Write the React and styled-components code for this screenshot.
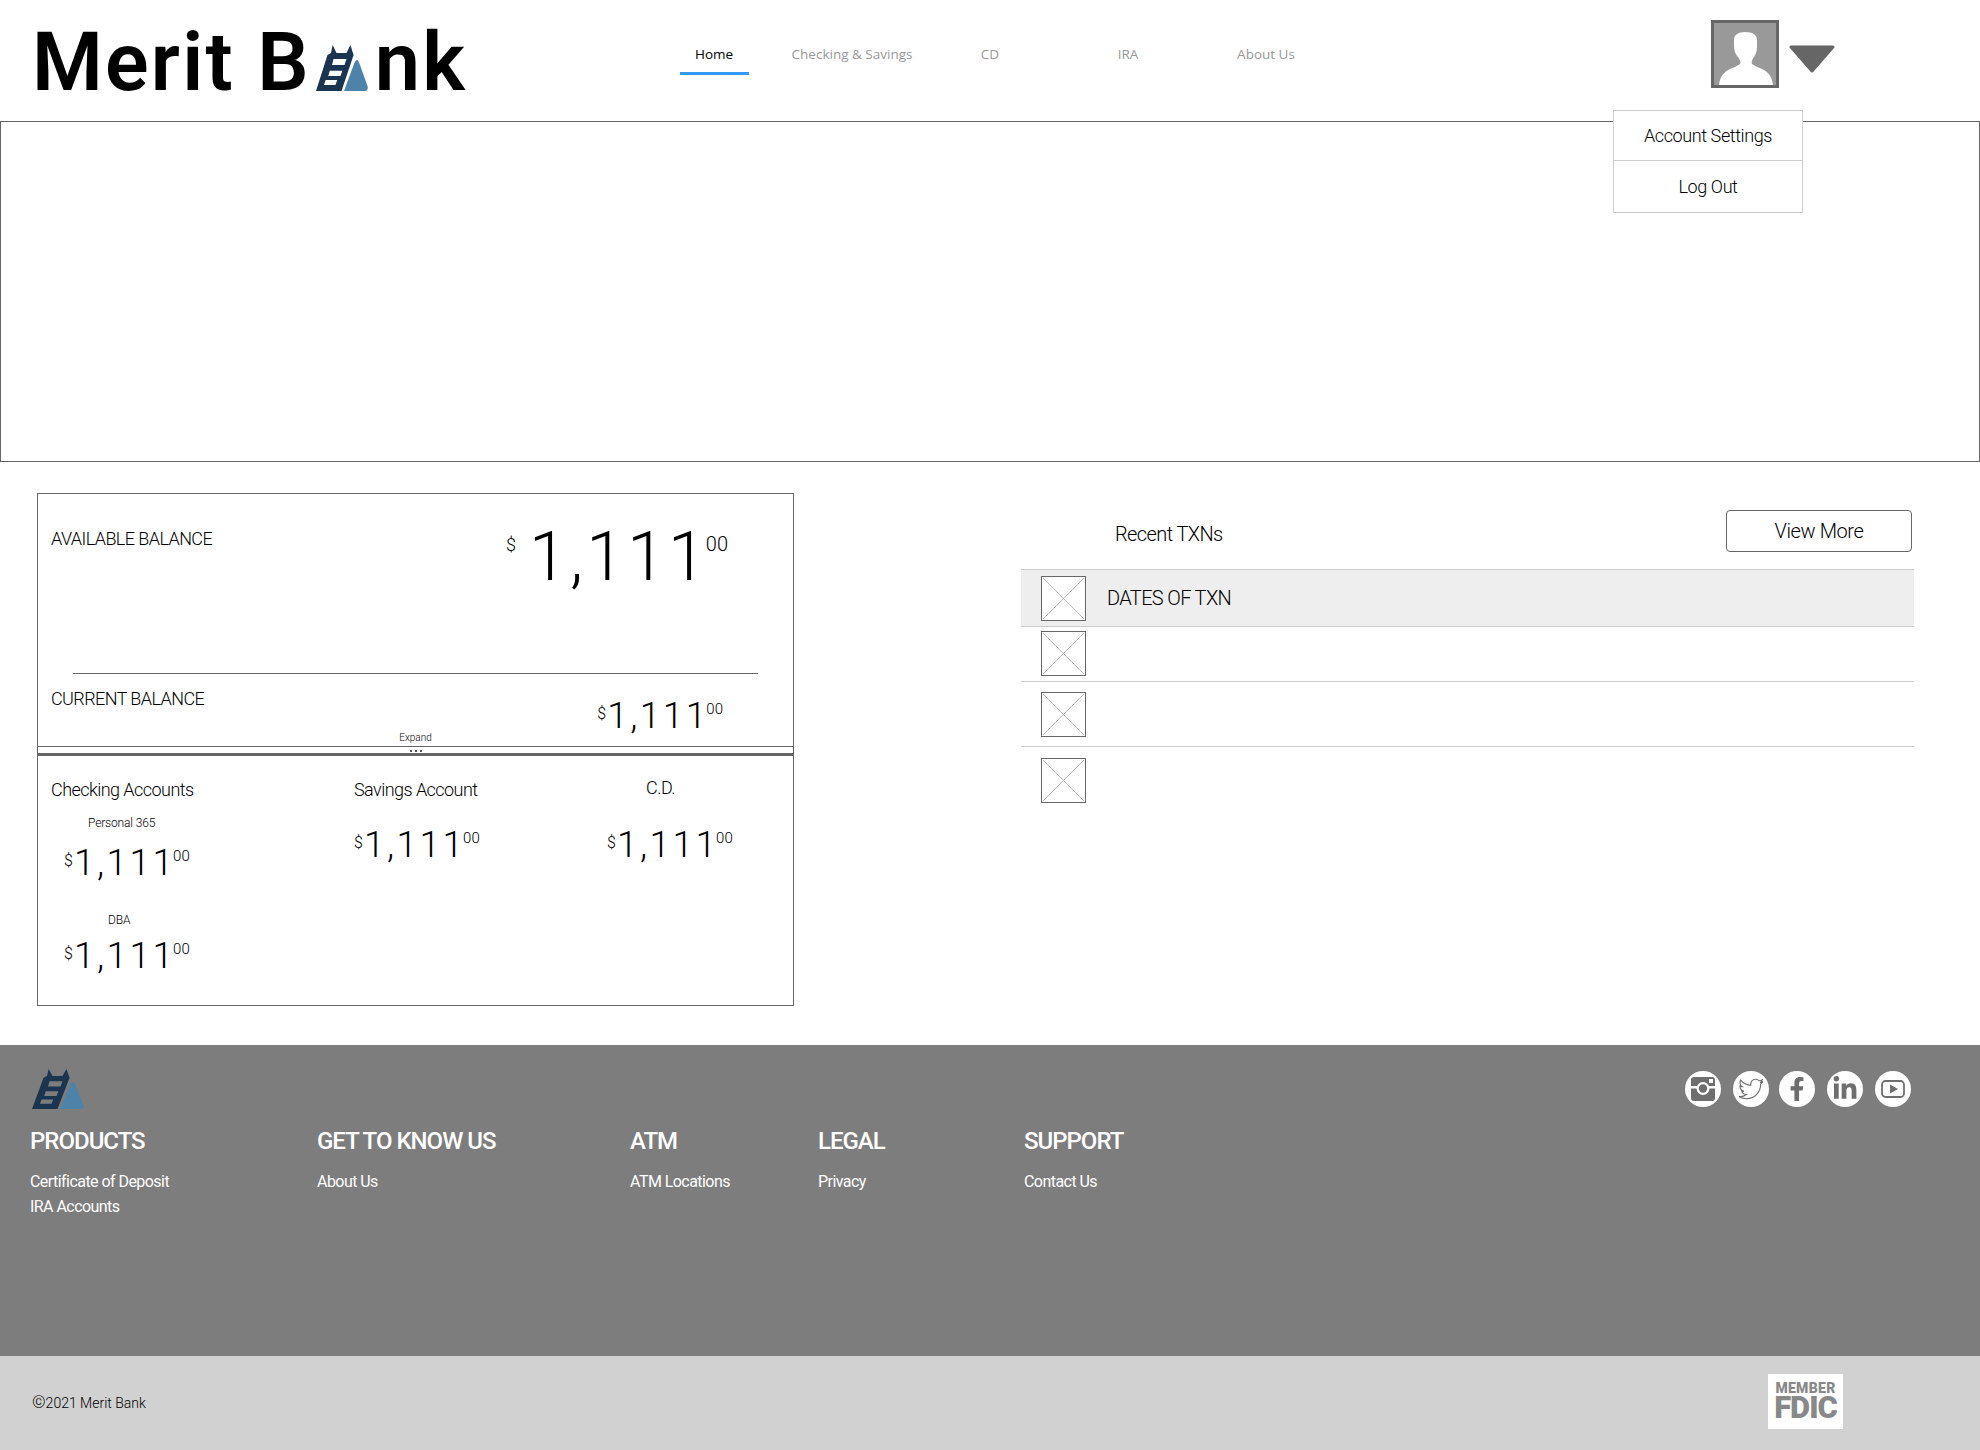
import React from 'react'
import styled, { createGlobalStyle } from 'styled-components'
import { FaTwitter, FaFacebookF, FaLinkedinIn } from 'react-icons/fa'

const GlobalStyle = createGlobalStyle`
  html, body {
    margin: 0;
    padding: 0;
    height: 1450px;
    overflow: hidden;
    background: #fff;
    color: #000;
    font-family: Roboto, "Open Sans", sans-serif;
  }
  * { box-sizing: border-box; }
`

const Page = styled.div`
  width: 1980px;
  height: 1450px;
  overflow: hidden;
  display: flex;
  flex-direction: column;
`

const Header = styled.header`
  position: relative;
  z-index: 2;
  height: 121px;
  display: grid;
  grid-template-columns: 645px 1066px 1fr;
`

const Brand = styled.div`
  display: flex;
  align-items: flex-start;
  padding: 16px 0 0 32px;
  font-size: 81px;
  line-height: 94px;
  font-weight: 600;
  letter-spacing: 2.2px;
  white-space: pre;
`

const BrandMark = styled.svg`
  flex: none;
  margin: 29px 7px 0 5px;
`

const Nav = styled.nav`
  display: flex;
  align-items: flex-start;
  padding-top: 40px;
`

const NavItem = styled.a`
  width: 138px;
  display: flex;
  flex-direction: column;
  align-items: center;
  font-family: "Open Sans", sans-serif;
  font-size: 13.5px;
  line-height: 28px;
  color: ${props => (props.$active ? '#000' : '#999')};

  &:after {
    content: '';
    width: 69px;
    height: 3px;
    margin-top: 4px;
    background: ${props => (props.$active ? '#39f' : 'transparent')};
  }
`

const UserMenu = styled.div`
  position: relative;
  display: flex;
  align-items: flex-start;
  gap: 10px;
  padding-top: 20px;
`

const Avatar = styled.div`
  width: 68px;
  height: 68px;
  border: 3px solid #666;
  background: #999;

  svg { display: block; }
`

const Caret = styled.svg`
  margin-top: 25px;
`

const Dropdown = styled.div`
  position: absolute;
  left: -98px;
  top: 110px;
  width: 190px;
  height: 103px;
  background: #fff;
  border: 1px solid #ccc;
  display: flex;
  flex-direction: column;
`

const DropdownItem = styled.div`
  flex: 1;
  display: flex;
  align-items: center;
  justify-content: center;
  font-size: 18px;
  font-weight: 300;
  letter-spacing: -0.4px;

  &:first-child { flex: none; height: 49px; }
  & + & { border-top: 1px solid #ccc; }
`

const Hero = styled.div`
  height: 341px;
  flex: none;
  border: 1px solid #666;
`

const Main = styled.main`
  height: 583px;
  flex: none;
  display: flex;
  align-items: flex-start;
  padding: 31px 0 0 37px;
`

const BalancePanel = styled.section`
  width: 757px;
  height: 513px;
  flex: none;
  border: 1px solid #666;
  display: flex;
  flex-direction: column;
`

const BalanceRow = styled.div`
  display: flex;
  justify-content: space-between;
  align-items: flex-start;
  height: ${props => props.$height}px;
  padding: 0 ${props => props.$right}px 0 13px;
`

const BalanceLabel = styled.div`
  margin-top: ${props => props.$top}px;
  font-size: 18px;
  line-height: 24px;
  font-weight: 300;
  letter-spacing: -0.58px;
`

const RowRule = styled.div`
  height: 1px;
  margin: 0 35px;
  background: #666;
`

const ExpandLabel = styled.div`
  height: 14px;
  margin-top: -1px;
  margin-bottom: 1px;
  font-size: 10px;
  line-height: 14px;
  font-weight: 300;
  text-align: center;
`

const ExpandBar = styled.div`
  height: 10px;
  border-top: 1px solid #666;
  border-bottom: 3px solid #666;
  display: flex;
  justify-content: center;
  gap: 3px;
  padding-top: 3px;
`

const Dot = styled.span`
  width: 2px;
  height: 2px;
  background: #555;
`

const AccountGrid = styled.div`
  display: grid;
  grid-template-columns: 303px 253px 1fr;
  padding: 0 0 0 13px;
`

const AccountColumn = styled.div`
  display: flex;
  flex-direction: column;
  align-items: flex-start;
`

const AccountTitle = styled.div`
  margin: ${props => props.$top || 22}px 0 0 ${props => props.$left || 0}px;
  font-size: 18px;
  line-height: 24px;
  font-weight: 300;
  letter-spacing: -0.55px;
`

const AccountName = styled.div`
  margin: ${props => props.$top}px 0 0 ${props => props.$left}px;
  font-size: 12px;
  line-height: 16px;
  font-weight: 300;
  letter-spacing: -0.15px;
`

const AmountWrap = styled.div`
  display: flex;
  align-items: flex-start;
  font-weight: 300;
  margin: ${props => props.$top || 0}px 0 0 ${props => props.$left || 0}px;
`

const Dollar = styled.span`
  font-size: ${props => (props.$large ? 18 : 16)}px;
  line-height: 20px;
  margin: ${props => (props.$large ? '12px 13px 0 0' : '10px 1px 0 0')};
`

const Whole = styled.span`
  font-size: ${props => (props.$large ? 68 : 37)}px;
  line-height: ${props => (props.$large ? 68 : 44)}px;
  letter-spacing: ${props => (props.$large ? 3.2 : 2.5)}px;
`

const LastDigit = styled.span`
  letter-spacing: 0;
`

const Cents = styled.span`
  font-size: ${props => (props.$large ? 20 : 15)}px;
  line-height: 20px;
  margin-top: ${props => (props.$large ? 11 : 5)}px;
`

const Amount = ({ large, top, left }) => (
  <AmountWrap $top={top} $left={left}>
    <Dollar $large={large}>$</Dollar>
    <Whole $large={large}>1,11<LastDigit>1</LastDigit></Whole>
    <Cents $large={large}>00</Cents>
  </AmountWrap>
)

const TxnPanel = styled.section`
  width: 893px;
  margin-left: 227px;
  padding-top: 17px;
`

const TxnHeader = styled.div`
  height: 42px;
  display: flex;
  align-items: center;
  justify-content: space-between;
  padding: 0 2px 0 94px;
`

const TxnTitle = styled.div`
  font-size: 20px;
  font-weight: 300;
  letter-spacing: -0.6px;
  margin-top: 6px;
`

const ViewMoreButton = styled.button`
  width: 186px;
  height: 42px;
  background: #fff;
  border: 1px solid #666;
  border-radius: 4px;
  font-family: inherit;
  font-size: 20px;
  font-weight: 300;
  letter-spacing: -0.4px;
  color: #000;
`

const TxnList = styled.div`
  margin-top: 17px;
`

const TxnRow = styled.div`
  height: ${props => props.$height}px;
  display: flex;
  align-items: center;
  gap: 21px;
  padding-left: 20px;
  padding-bottom: ${props => props.$lift || 0}px;
  background: ${props => (props.$head ? '#eee' : 'transparent')};
  border-top: ${props => (props.$head ? '1px solid #ccc' : '0')};
  border-bottom: ${props => (props.$last ? '0' : '1px solid #ccc')};
`

const TxnDate = styled.div`
  font-size: 20px;
  font-weight: 300;
  letter-spacing: -0.65px;
`

const Footer = styled.footer`
  height: 311px;
  flex: none;
  background: #7d7d7d;
  color: #fff;
  padding-top: 24px;
`

const FooterTop = styled.div`
  height: 40px;
  display: flex;
  justify-content: space-between;
  padding: 0 69px 0 32px;
`

const SocialRow = styled.div`
  display: flex;
  gap: 12px;
  padding-top: 2px;
`

const SocialIcon = styled.div`
  width: 36px;
  height: 36px;
  border-radius: 50%;
  background: #fff;
  color: #6e6e6e;
  display: flex;
  align-items: center;
  justify-content: center;
  overflow: hidden;

  &:nth-child(3) { margin-left: -2px; }
`

const FooterColumns = styled.div`
  display: flex;
  margin-top: 17px;
  padding-left: 30px;
`

const FooterColumn = styled.div`
  width: ${props => props.$width}px;
  flex: none;
`

const FooterHeading = styled.div`
  font-size: 24px;
  line-height: 30px;
  font-weight: 500;
  letter-spacing: -1px;
`

const FooterLinks = styled.div`
  margin-top: 13px;
  font-size: 16px;
  line-height: 25px;
  font-weight: 400;
  letter-spacing: -0.55px;
`

const LegalBar = styled.div`
  height: 94px;
  flex: none;
  background: #d1d1d1;
  display: flex;
  align-items: center;
  justify-content: space-between;
  padding: 0 137px 0 32px;
`

const Copyright = styled.div`
  font-size: 14px;
  font-weight: 300;
`

const CopyMark = styled.span`
  font-size: 17px;
  line-height: 14px;
  margin-right: 0;
`

const FdicBadge = styled.div`
  width: 75px;
  height: 55px;
  margin-bottom: 3px;
  background: #fff;
  color: #888;
  font-weight: 900;
  display: flex;
  flex-direction: column;
  align-items: center;
  padding-top: 7px;
`

const FdicMember = styled.div`
  font-size: 14px;
  line-height: 14px;
  letter-spacing: 0.3px;
`

const FdicName = styled.div`
  font-size: 31px;
  line-height: 26px;
  letter-spacing: -1px;
`

const LadderMark = ({ width, height, ...rest }) => (
  <svg width={width} height={height} viewBox="0 0 52 46" preserveAspectRatio="none" {...rest}>
    <path
      fillRule="evenodd"
      fill="#1b3550"
      d="M0 46 L11.5 10 L15 8 L16.6 0 L20.5 8 L30.5 8 L34.4 0 L37.6 10 L25.5 46 Z M17.5 14 L16 20 L28.5 20 L30.5 14 Z M13.8 25.7 L12.2 31 L24.5 31 L26.4 25.7 Z M9.6 35 L8 40 L19.5 40 L21.2 35 Z"
    />
    <path
      fill="#4d83a8"
      d="M41 15 C42 15 43 17 44 20 L51.5 41 C52.5 44 51 46 49 46 L28 46 L38 19 C39 16 40 15 41 15 Z"
    />
  </svg>
)

const Placeholder = () => (
  <svg width="45" height="45" viewBox="0 0 45 45">
    <rect x="0.5" y="0.5" width="44" height="44" fill="#fff" stroke="#666" />
    <path d="M2 2 L43 43 M43 2 L2 43" stroke="#aaa" strokeWidth="0.8" fill="none" />
  </svg>
)

const InstagramGlyph = () => (
  <svg width="36" height="36" viewBox="0 0 36 36">
    <rect x="6" y="6" width="24" height="24" rx="3" fill="#6e6e6e" />
    <rect x="6" y="15" width="24" height="2.5" fill="#fff" />
    <circle cx="18" cy="17.5" r="6.5" fill="#fff" />
    <circle cx="18" cy="17.5" r="4.2" fill="#6e6e6e" />
    <rect x="24" y="8" width="4" height="4" fill="#fff" />
  </svg>
)

const YoutubeGlyph = () => (
  <svg width="36" height="36" viewBox="0 0 36 36">
    <rect x="7" y="10" width="22" height="16" rx="3.5" fill="none" stroke="#6e6e6e" strokeWidth="1.8" />
    <path d="M15 13.5 L23 18 L15 22.5 Z" fill="#6e6e6e" />
  </svg>
)

const txnRows = [
  { height: 58, head: true, label: 'DATES OF TXN' },
  { height: 55, lift: 1 },
  { height: 65 },
  { height: 66, last: true },
]

const footerColumns = [
  { width: 287, title: 'PRODUCTS', links: ['Certificate of Deposit', 'IRA Accounts'] },
  { width: 313, title: 'GET TO KNOW US', links: ['About Us'] },
  { width: 188, title: 'ATM', links: ['ATM Locations'] },
  { width: 206, title: 'LEGAL', links: ['Privacy'] },
  { width: 200, title: 'SUPPORT', links: ['Contact Us'] },
]

const navItems = ['Home', 'Checking & Savings', 'CD', 'IRA', 'About Us']

const App = () => (
  <Page>
    <GlobalStyle />
    <Header>
      <Brand>
        Merit B
        <BrandMark as={LadderMark} width={52} height={46} />
        nk
      </Brand>
      <Nav>
        {navItems.map((item, index) => (
          <NavItem key={item} $active={index === 0}>{item}</NavItem>
        ))}
      </Nav>
      <UserMenu>
        <Avatar>
          <svg width="62" height="62" viewBox="3 3 62 62">
            <path
              fill="#fff"
              d="M8 65 C9 55 14 50 24 47 L29 44 C30 42 29 40 27 37 C24 34 23 30 23 25 L23 20 C23 15 27 12 34 12 C42 12 46 15 46 20 L46 26 C46 31 45 34 43 37 C41 40 40 42 41 44 L46 47 C56 50 61 55 62 65 Z"
            />
          </svg>
        </Avatar>
        <Caret width="46" height="28" viewBox="0 0 46 28">
          <path d="M2 2 L44 2 L23 26 Z" fill="#666" stroke="#666" strokeWidth="3" strokeLinejoin="round" />
        </Caret>
        <Dropdown>
          <DropdownItem>Account Settings</DropdownItem>
          <DropdownItem>Log Out</DropdownItem>
        </Dropdown>
      </UserMenu>
    </Header>

    <Hero />

    <Main>
      <BalancePanel>
        <BalanceRow $height={179} $right={65}>
          <BalanceLabel $top={33}>AVAILABLE BALANCE</BalanceLabel>
          <Amount large top={29} />
        </BalanceRow>
        <RowRule />
        <BalanceRow $height={58} $right={70}>
          <BalanceLabel $top={13}>CURRENT BALANCE</BalanceLabel>
          <Amount top={20} />
        </BalanceRow>
        <ExpandLabel>Expand</ExpandLabel>
        <ExpandBar>
          <Dot />
          <Dot />
          <Dot />
        </ExpandBar>
        <AccountGrid>
          <AccountColumn>
            <AccountTitle>Checking Accounts</AccountTitle>
            <AccountName $top={13} $left={37}>Personal 365</AccountName>
            <Amount top={10} left={13} />
            <AccountName $top={27} $left={57}>DBA</AccountName>
            <Amount top={6} left={13} />
          </AccountColumn>
          <AccountColumn>
            <AccountTitle>Savings Account</AccountTitle>
            <Amount top={21} />
          </AccountColumn>
          <AccountColumn>
            <AccountTitle $top={20} $left={39}>C.D.</AccountTitle>
            <Amount top={23} />
          </AccountColumn>
        </AccountGrid>
      </BalancePanel>

      <TxnPanel>
        <TxnHeader>
          <TxnTitle>Recent TXNs</TxnTitle>
          <ViewMoreButton>View More</ViewMoreButton>
        </TxnHeader>
        <TxnList>
          {txnRows.map((row, index) => (
            <TxnRow key={index} $height={row.height} $head={row.head} $last={row.last} $lift={row.lift}>
              <Placeholder />
              {row.label && <TxnDate>{row.label}</TxnDate>}
            </TxnRow>
          ))}
        </TxnList>
      </TxnPanel>
    </Main>

    <Footer>
      <FooterTop>
        <LadderMark width={52} height={40} />
        <SocialRow>
          <SocialIcon><InstagramGlyph /></SocialIcon>
          <SocialIcon><FaTwitter size={24} style={{ fill: 'none', stroke: '#6e6e6e', strokeWidth: 24 }} /></SocialIcon>
          <SocialIcon><FaFacebookF size={24} /></SocialIcon>
          <SocialIcon><FaLinkedinIn size={26} /></SocialIcon>
          <SocialIcon><YoutubeGlyph /></SocialIcon>
        </SocialRow>
      </FooterTop>
      <FooterColumns>
        {footerColumns.map(column => (
          <FooterColumn key={column.title} $width={column.width}>
            <FooterHeading>{column.title}</FooterHeading>
            <FooterLinks>
              {column.links.map(link => (
                <div key={link}>{link}</div>
              ))}
            </FooterLinks>
          </FooterColumn>
        ))}
      </FooterColumns>
    </Footer>

    <LegalBar>
      <Copyright><CopyMark>©</CopyMark>2021 Merit Bank</Copyright>
      <FdicBadge>
        <FdicMember>MEMBER</FdicMember>
        <FdicName>FDIC</FdicName>
      </FdicBadge>
    </LegalBar>
  </Page>
)

export default App
